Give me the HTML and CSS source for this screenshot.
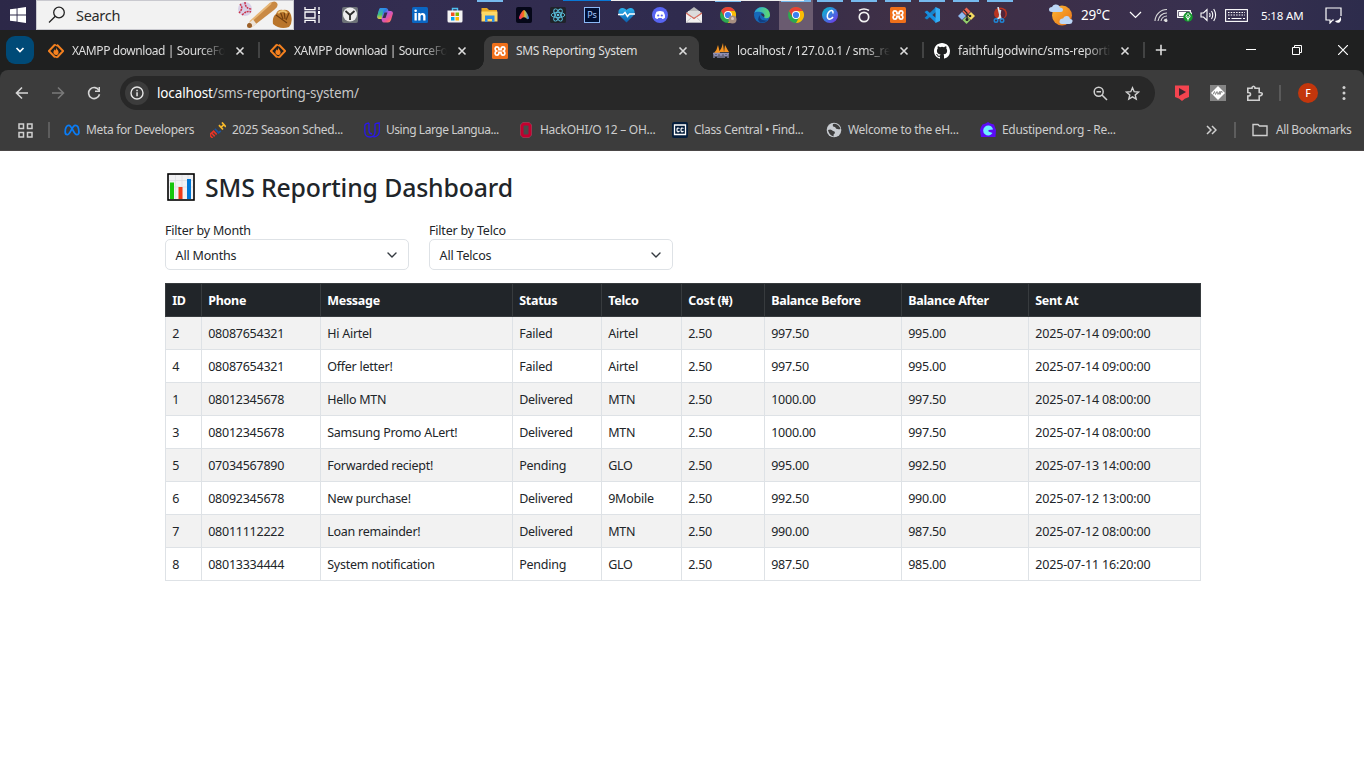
FILE: index.html
```html
<!DOCTYPE html>
<html lang="en">
<head>
<meta charset="utf-8">
<title>SMS Reporting System</title>
<link rel="stylesheet" href="styles.css">
</head>
<body>
<svg width="0" height="0" class="defs">
  <defs>
    <linearGradient id="gCop" x1="0" y1="0" x2="1" y2="1"><stop offset="0" stop-color="#2bb5f5"/><stop offset=".35" stop-color="#2c7be5"/><stop offset=".5" stop-color="#b45be0"/><stop offset=".75" stop-color="#f4568a"/><stop offset="1" stop-color="#f9a53c"/></linearGradient>
    <linearGradient id="gCop2" x1="0" y1="0" x2="0" y2="1"><stop offset="0" stop-color="#2f8bf0"/><stop offset=".6" stop-color="#3fc27c"/><stop offset="1" stop-color="#f3c52e"/></linearGradient>
    <linearGradient id="gCanva" x1="0" y1="0" x2="1" y2="1"><stop offset="0" stop-color="#00c4cc"/><stop offset=".5" stop-color="#3a7be0"/><stop offset="1" stop-color="#7d2ae8"/></linearGradient>
    <linearGradient id="gEdge" x1="0" y1="0" x2="1" y2="0"><stop offset="0" stop-color="#2aa4e0"/><stop offset="1" stop-color="#5fdc6a"/></linearGradient>
    <linearGradient id="gSun" x1="0" y1="0" x2="1" y2="1"><stop offset="0" stop-color="#fdb931"/><stop offset="1" stop-color="#e8701a"/></linearGradient>
    <linearGradient id="gA" x1="0" y1="0" x2="1" y2="0"><stop offset="0" stop-color="#f0307a"/><stop offset=".45" stop-color="#f9701b"/><stop offset=".6" stop-color="#c8c84a"/><stop offset="1" stop-color="#2b6ff0"/></linearGradient>
    <linearGradient id="gHeart" x1="0" y1="0" x2="0" y2="1"><stop offset="0" stop-color="#2cb3ee"/><stop offset="1" stop-color="#0b5fae"/></linearGradient>
    <symbol id="close" viewBox="0 0 10 10"><path d="M1.500 1.500l7 7M8.500 1.500l-7 7" stroke="#dcdcdc" stroke-width="1.600" fill="none"/></symbol>
    <symbol id="sf" viewBox="0 0 16 16"><path d="M7 1.500L.8 8L7 14.300M9 1.700L15.200 8L9 14.500" fill="none" stroke="#f5811f" stroke-width="2"/><path d="M7 1.500l2 1.500M7 13.500l2 1" stroke="#f5811f" stroke-width="1.500"/><path d="M8 4.300C8.300 6.300 10.800 7.200 10.600 9.500C10.400 11.400 9.300 12 8 12S5.400 11 5.400 9.300C5.400 7.800 6.500 7.300 6.600 6.300C7.200 6.700 7.300 7.300 7.300 7.800C7.900 7 8.300 5.800 8 4.300Z" fill="#f5811f"/></symbol>
    <symbol id="xampp" viewBox="0 0 16 16"><rect width="16" height="16" rx="1.500" fill="#f0701a"/><path d="M5 3.800C2.800 3.800 2.300 6.800 4.500 8C2.300 9.200 2.800 12.200 5 12.200C7 12.200 7 10.500 7 9.300H9C9 10.500 9 12.200 11 12.200C13.200 12.200 13.700 9.200 11.500 8C13.700 6.800 13.200 3.800 11 3.800C9 3.800 9 5.500 9 6.700H7C7 5.500 7 3.800 5 3.800Z" fill="none" stroke="#fff" stroke-width="1.700"/></symbol>
    <symbol id="chrome" viewBox="0 0 16 16"><circle cx="8" cy="8" r="8" fill="#2da94f"/><path d="M1.070 4A8 8 0 0 1 14.930 4L8 4L4.540 10Z" fill="#ea4335"/><path d="M14.930 4A8 8 0 0 1 8 16L11.460 10L8 4Z" fill="#fbbc05"/><circle cx="8" cy="8" r="4" fill="#fff"/><circle cx="8" cy="8" r="3.100" fill="#3b7ff0"/></symbol>
    <symbol id="chev" viewBox="0 0 12 12"><path d="M2 4L6 8L10 4" fill="none" stroke="#343a40" stroke-width="1.400" stroke-linecap="round" stroke-linejoin="round"/></symbol>
  </defs>
</svg>

<div class="taskbar">
  <div class="start"><svg width="16" height="16" viewBox="0 0 16 16"><path d="M0 2.300L6.600 1.400V7.600H0ZM7.500 1.200L16 0V7.600H7.500ZM0 8.400H6.600V14.600L0 13.700ZM7.500 8.400H16V16L7.500 14.800Z" fill="#fff"/></svg></div>
  <div class="search">
    <svg width="18" height="18" viewBox="0 0 18 18" fill="none" stroke="#222" stroke-width="1.300"><circle cx="11" cy="6.500" r="5.300"/><path d="M7.300 10.300L1 16.500"/></svg>
    <span>Search</span>
    <svg class="ball" width="56" height="28" viewBox="0 0 56 28"><circle cx="8" cy="8" r="7" fill="#d9cfe6"/><path d="M3 3Q7 7 2 12M8 1Q8 8 15 8M5 14Q10 9 14 11" stroke="#c9344b" stroke-width="1.500" fill="none" stroke-dasharray="2 .8"/><path d="M11 23L33 2Q38 -1 40 2Q42 5 37 9L15 26Z" fill="#c98a45"/><path d="M13 21L34 2" stroke="#e7b777" stroke-width="2"/><path d="M12 22l3.500 4 4-3-3.500-4.500Z" fill="#ece3d8"/><circle cx="12.500" cy="24.500" r="2.500" fill="#9b6029"/><path d="M36 23Q35 16 39 13Q41 8 46 9Q52 8 54 14Q56 22 52 26Q43 29 36 23Z" fill="#b9752b"/><path d="M39 14L50 22M43 10L46 18M47 10L48 18M52 12L49 19" stroke="#734010" stroke-width="1.200"/><path d="M41 12q5-4 9 0" stroke="#edc170" stroke-width="2" fill="none"/></svg>
  </div>
  <div class="slot taskview"><svg width="17" height="16" viewBox="0 0 17 16" fill="none" stroke="#fff" stroke-width="1.300"><path d="M1 0V2.600H11V0M1 16V13.400H11V16M1 5h10v6H1ZM15 0V3M15 8v8"/><rect x="14" y="4" width="2" height="3" fill="#fff" stroke="none"/></svg></div>
  <div class="slot"><svg width="16" height="16" viewBox="0 0 16 16"><rect width="16" height="16" rx="2" fill="#6e7378"/><circle cx="8" cy="7.500" r="7" fill="#ededed"/><path d="M3.500 4L8 8L12.500 4M8 8V13" stroke="#2b2b2b" stroke-width="1.800" fill="none"/></svg></div>
  <div class="slot wide"><svg width="16" height="16" viewBox="0 0 16 16"><path d="M4 1H9Q10.500 1 11 2.500L11.500 4H14Q16.500 4.500 15.800 7L14 13Q13 15.500 11 15.500H7Q5.500 15.500 5 14L4.500 12H2Q-.5 11.500 .3 9L2 3Q2.500 1 4 1Z" fill="url(#gCop)"/><path d="M4 1H8Q6.500 2 6 5L4.500 12H2Q-.5 11.500 .3 9L2 3Q2.500 1 4 1Z" fill="url(#gCop2)"/><path d="M7.500 5.500h3L8.500 11h-3Z" fill="#35304e"/></svg></div>
  <div class="slot wide"><svg width="16" height="16" viewBox="0 0 16 16"><rect width="16" height="16" rx="1.500" fill="#0a66c2"/><path d="M2.500 6h2.300v7.500H2.500ZM6.200 6h2.200v1.200C9.500 5.300 13.500 5.400 13.500 9v4.500h-2.300V9.500c0-2-2.700-2-2.700 0v4H6.200Z" fill="#fff"/><circle cx="3.650" cy="3.700" r="1.300" fill="#fff"/></svg></div>
  <div class="slot wide"><svg width="16" height="16" viewBox="0 0 16 16"><path d="M5.500 4V1.500H10.500V4" fill="none" stroke="#4fc0f0" stroke-width="1.400"/><path d="M.5 3.500H15.500V14Q15.500 15.500 14 15.500H2Q.5 15.500 .5 14Z" fill="#f3f3f3"/><path d="M4 5.500h3.500V9H4Z" fill="#f25022"/><path d="M8.500 5.500H12V9H8.500Z" fill="#7fba00"/><path d="M4 10h3.500v3.500H4Z" fill="#00a4ef"/><path d="M8.500 10H12v3.500H8.500Z" fill="#ffb900"/></svg></div>
  <div class="slot wide on"><svg width="17" height="16" viewBox="0 0 17 16"><path d="M.5 1H6L8 3H16V7H.5Z" fill="#e9a823"/><path d="M.5 4.500H16.500V14.500H.5Z" fill="#ffd967"/><path d="M4 15V8.500H13.500V15H11V12H6.500V15Z" fill="#2f8de4"/></svg></div>
  <div class="slot"><svg width="16" height="16" viewBox="0 0 16 16"><rect width="16" height="16" rx="2" fill="#050718"/><path d="M8 3C9.500 3 13 9 13 11C13 12.500 11 12.500 10.500 11.500Q8 9 5.500 11.500C5 12.500 3 12.500 3 11C3 9 6.500 3 8 3Z" fill="url(#gA)"/></svg></div>
  <div class="slot"><svg width="16" height="16" viewBox="0 0 16 16"><rect width="16" height="16" rx="1.500" fill="#20232a"/><g fill="none" stroke="#5cc5e0" stroke-width=".9"><ellipse cx="8" cy="8" rx="6.800" ry="2.600"/><ellipse cx="8" cy="8" rx="6.800" ry="2.600" transform="rotate(60 8 8)"/><ellipse cx="8" cy="8" rx="6.800" ry="2.600" transform="rotate(120 8 8)"/></g><circle cx="8" cy="8" r="1.300" fill="#5cc5e0"/></svg></div>
  <div class="slot"><span class="ps">Ps</span></div>
  <div class="slot"><svg width="17" height="16" viewBox="0 0 17 16"><path d="M8.500 15.500L1.500 8.500C-1 5 1 1 4.500 1C6.500 1 7.500 2 8.500 3C9.500 2 10.500 1 12.500 1C16 1 18 5 15.500 8.500Z" fill="url(#gHeart)"/><path d="M0 7.500H5L7 5.500L9.500 9.500L11.500 7H17" fill="none" stroke="#fff" stroke-width="1.500"/></svg></div>
  <div class="slot"><svg width="16" height="16" viewBox="0 0 16 16"><circle cx="8" cy="8" r="8" fill="#5865f2"/><path d="M4.500 4.700Q8 3.500 11.500 4.700Q13.300 7.500 13 10.700Q11.500 12 10.300 12L9.600 11H6.400L5.700 12Q4.500 12 3 10.700Q2.700 7.500 4.500 4.700Z" fill="#fff"/><circle cx="6.200" cy="8.500" r="1.100" fill="#5865f2"/><circle cx="9.800" cy="8.500" r="1.100" fill="#5865f2"/></svg></div>
  <div class="slot"><svg width="16" height="16" viewBox="0 0 16 16"><path d="M0 6L8 0L16 6V15.500H0Z" fill="#b9b9b9"/><path d="M2 4H14V10H2Z" fill="#dcdcdc"/><path d="M0 6L8 11L16 6V15.500H0Z" fill="#f2f0f0"/><path d="M0 6L8 11.500L16 6" fill="none" stroke="#d86a5c" stroke-width="1.300"/><path d="M0 15.500L6 10M16 15.500L10 10" stroke="#c7c7c7"/></svg></div>
  <div class="slot on"><svg width="17" height="17" viewBox="0 0 17 17"><use href="#chrome" width="16" height="16"/><circle cx="12.500" cy="12.500" r="4" fill="#a88f82"/><circle cx="12.500" cy="11.500" r="1.500" fill="#dcc9bf"/></svg></div>
  <div class="slot"><svg width="16" height="16" viewBox="0 0 16 16"><circle cx="8" cy="8" r="8" fill="#1669b8"/><path d="M.3 6A8 8 0 0 1 16 8C16 12 10.500 12 10 10C11 8 9.500 5 6.500 5C3.500 4.500 1 5 .3 6Z" fill="url(#gEdge)"/><path d="M6 8Q5 14 13.500 13.500Q10 16 6.500 15.500Q2 13 6 8Z" fill="#123f83"/><path d="M10 10C9 9.500 7 8.500 7 6.500Q10.500 6.500 10.500 9Z" fill="#35304a"/></svg></div>
  <div class="slot on current"><svg width="16" height="16"><use href="#chrome"/></svg></div>
  <div class="slot on"><svg width="16" height="16" viewBox="0 0 16 16"><circle cx="8" cy="8" r="8" fill="url(#gCanva)"/><path d="M11 6.500C11.500 3.500 9.500 3 8 4C5.500 5.500 4.500 9.500 6 11.500C7.500 13 10 11.500 11 10" fill="none" stroke="#fff" stroke-width="1.500"/></svg></div>
  <div class="slot on"><svg width="14" height="16" viewBox="0 0 14 16" fill="none" stroke="#f3f3f3" stroke-width="1.700"><circle cx="7" cy="10" r="4.700"/><path d="M2 3.500Q7 .5 12 3.500"/></svg></div>
  <div class="slot on"><svg width="16" height="16"><use href="#xampp"/></svg></div>
  <div class="slot on"><svg width="16" height="16" viewBox="0 0 16 16"><path d="M12 1V5L3 12.500L.5 11L12 0Z" fill="#1684cc"/><path d="M12 15V11L3 3.500L.5 5L12 16Z" fill="#168fe0"/><path d="M11.500 0L16 2V14L11.500 16Z" fill="#35aef5"/></svg></div>
  <div class="slot on"><svg width="17" height="17" viewBox="0 0 17 17"><path d="M8.500 .5L12.500 4.500L8.500 8.500L4.500 4.500Z" fill="#f06550"/><path d="M4 5L8 9L4 13L0 9Z" fill="#8eb9f0"/><path d="M13 5L17 9L13 13L9 9Z" fill="#f5dc62"/><path d="M8.500 9.500L12.500 13L8.500 17L4.500 13Z" fill="#93d06b"/><path d="M6 3L9 6V13M9 7L12 9" stroke="#222" stroke-width="1.200" fill="none"/><circle cx="9" cy="12.500" r="1.500" fill="#222"/><circle cx="12" cy="9" r="1.300" fill="#222"/></svg></div>
  <div class="slot on"><svg width="16" height="16" viewBox="0 0 16 16"><ellipse cx="8.500" cy="6.500" rx="6.500" ry="6" fill="#b93520"/><path d="M8.500 2A5 5 0 0 1 8.500 12Z" fill="#53263a"/><path d="M6 0L8.500 10L5 12M8.500 3L7.500 10L10 12" stroke="#d7e3ec" stroke-width="1.600" fill="none"/><circle cx="4" cy="13.500" r="1.800" fill="none" stroke="#1e87d6" stroke-width="1.400"/><circle cx="10" cy="13.500" r="1.800" fill="none" stroke="#1e87d6" stroke-width="1.400"/></svg></div>
  <div class="tray">
    <svg class="t-sun" width="24" height="24" viewBox="0 0 24 24"><circle cx="13" cy="12.500" r="10" fill="url(#gSun)"/><path d="M3 9Q0 9 0 6.500T3 4Q4 1 7 1.500Q10 1.500 11 4.500Q14 4.500 14 7T11 9ZM13 21Q10 21 10.500 18T14 15.500Q15 12.500 18 13Q20.500 13 21 16Q24 16 23.500 18.500T20.500 21Z" fill="#bcd6f6"/></svg>
    <span class="t-temp">29°C</span>
    <svg class="t-chev" width="13" height="8" viewBox="0 0 13 8"><path d="M1 1L6.500 6.500L12 1" stroke="#fff" stroke-width="1.200" fill="none"/></svg>
    <svg class="t-wifi" width="14" height="14" viewBox="0 0 14 14" fill="none" stroke="#ddd" stroke-width="1.100"><path d="M1 13A12 12 0 0 1 13 1.500M4 13A9 9 0 0 1 13 5M7 13A6 6 0 0 1 13 8M10 13A3 3 0 0 1 13 11"/><circle cx="12" cy="12.500" r="1" fill="#fff"/></svg>
    <svg class="t-bat" width="16" height="14" viewBox="0 0 16 14"><path d="M.7 2.700H13.300V9.300H.7Z" fill="none" stroke="#fff" stroke-width="1.200"/><path d="M2 4H9V8H2ZM14 4.500h1v3h-1Z" fill="#fff"/><circle cx="11" cy="9" r="4.700" fill="#139a2c"/><path d="M11 5.500Q15 8.500 11 11Q7 8.500 11 5.500M11 8V12.500" stroke="#fff" fill="none"/></svg>
    <svg class="t-vol" width="17" height="14" viewBox="0 0 17 14" fill="none" stroke="#fff" stroke-width="1.100"><path d="M1 5H3.500L7 1.500V12.500L3.500 9H1ZM9.500 5Q10.700 7 9.500 9M11.500 3Q14 7 11.500 11M13.700 1Q17.500 7 13.700 13"/></svg>
    <svg class="t-kbd" width="23" height="13" viewBox="0 0 23 13" fill="none" stroke="#fff" stroke-width="1.100"><rect x=".6" y=".6" width="21.800" height="11.800"/><path d="M3 3.500H20M3 6H20" stroke-dasharray="1.500 1.200"/><path d="M3 9.500h2M6.500 9.500h10M18 9.500h2"/></svg>
    <span class="t-time">5:18 AM</span>
    <svg class="t-act" width="17" height="17" viewBox="0 0 17 17" fill="none" stroke="#fff" stroke-width="1.200"><path d="M9 13H7.500L5 16V13H1V1H16V9"/><path d="M12 13.500Q15.500 12.500 15 9.500Q17.500 13 14.500 15.500Q11 16.500 10 14Z" fill="#fff" stroke="none"/></svg>
  </div>
  <div class="progress"><i></i></div>
</div>

<div class="tabstrip">
  <div class="tabsearch"><svg width="10" height="8" viewBox="0 0 10 8"><path d="M1.500 2L5 5.500L8.500 2" stroke="#fff" stroke-width="1.700" fill="none"/></svg></div>
  <div class="tab t1"><svg width="16" height="16"><use href="#sf"/></svg><span class="fade">XAMPP download | SourceFo</span><svg class="x" width="10" height="10"><use href="#close"/></svg></div>
  <div class="tab t2"><svg width="16" height="16"><use href="#sf"/></svg><span class="fade">XAMPP download | SourceFo</span><svg class="x" width="10" height="10"><use href="#close"/></svg></div>
  <div class="tab active"><svg width="16" height="16"><use href="#xampp"/></svg><span>SMS Reporting System</span><svg class="x" width="10" height="10"><use href="#close"/></svg></div>
  <div class="tab t4"><svg width="17" height="17" viewBox="0 0 17 17"><path d="M1 11Q4 8 5 3L7 11ZM6 10Q9 6 10 1L11 10ZM11 10L12 3Q14 7 16 10Z" fill="#f59320"/><path d="M1 16V12l2 2 2-2v4M7 16v-3h2v3M11 16v-4l2 2 2-2v4M0 11.500H16" stroke="#8f8fb4" fill="none" stroke-width="1.300"/></svg><span class="fade">localhost / 127.0.0.1 / sms_re</span><svg class="x" width="10" height="10"><use href="#close"/></svg></div>
  <div class="tab t5"><svg width="16" height="16" viewBox="0 0 16 16"><path fill="#fff" d="M8 0C3.580 0 0 3.580 0 8c0 3.540 2.290 6.530 5.470 7.590.4.070.55-.17.55-.38 0-.19-.01-.82-.01-1.490-2.010.37-2.530-.49-2.690-.94-.09-.23-.48-.94-.82-1.130-.28-.15-.68-.52-.01-.53.63-.01 1.080.58 1.230.82.72 1.210 1.870.87 2.330.66.07-.52.28-.87.51-1.070-1.780-.2-3.640-.89-3.640-3.950 0-.87.31-1.590.82-2.150-.08-.2-.36-1.020.08-2.120 0 0 .67-.21 2.200.82a7.600 7.600 0 0 1 4 0c1.530-1.040 2.200-.82 2.200-.82.44 1.100.16 1.920.08 2.120.51.56.82 1.270.82 2.150 0 3.070-1.870 3.750-3.650 3.950.29.25.54.73.54 1.480 0 1.070-.01 1.930-.01 2.200 0 .21.15.46.55.38A8 8 0 0 0 16 8c0-4.420-3.580-8-8-8z"/></svg><span class="fade">faithfulgodwinc/sms-reportin</span><svg class="x" width="10" height="10"><use href="#close"/></svg></div>
  <svg class="plus" width="12" height="12" viewBox="0 0 12 12"><path d="M6 .8V11.200M.8 6H11.200" stroke="#ddd" stroke-width="1.600"/></svg>
  <div class="winbtns">
    <svg width="10" height="10" viewBox="0 0 10 10"><path d="M0 4.500H10" stroke="#fff"/></svg>
    <svg width="10" height="10" viewBox="0 0 10 10"><path d="M.5 2.500H7.500V9.500H.5ZM2.500 2.500V.5H9.500V7.500H7.500" fill="none" stroke="#fff"/></svg>
    <svg width="10" height="10" viewBox="0 0 10 10"><path d="M0 0L10 10M10 0L0 10" stroke="#fff" stroke-width="1.200"/></svg>
  </div>
</div>

<div class="chrome">
  <div class="toolbar">
    <svg class="nav" width="14" height="14" viewBox="0 0 14 14"><path d="M13 7H1.500M7 1.500L1.500 7L7 12.500" fill="none" stroke="#d6d6d6" stroke-width="1.600"/></svg>
    <svg class="nav" width="14" height="14" viewBox="0 0 14 14"><path d="M1 7H12.500M7 1.500L12.500 7L7 12.500" fill="none" stroke="#797979" stroke-width="1.600"/></svg>
    <svg class="nav" width="14" height="14" viewBox="0 0 14 14"><path d="M12 4.500A5.500 5.500 0 1 0 12.500 8.300" fill="none" stroke="#d6d6d6" stroke-width="1.600"/><path d="M13 1V6H8V4.500H11.500V1Z" fill="#d6d6d6"/></svg>
    <div class="omnibox">
      <div class="info"><svg width="14" height="14" viewBox="0 0 14 14"><circle cx="7" cy="7" r="6" fill="none" stroke="#e6e6e6" stroke-width="1.400"/><path d="M6.300 6.200h1.500V10.200H6.300ZM6.300 3.700h1.500V5.200H6.300Z" fill="#e6e6e6"/></svg></div>
      <span class="url">localhost<em>/sms-reporting-system/</em></span>
      <svg class="mag" width="15" height="15" viewBox="0 0 15 15" fill="none" stroke="#d0d0d0" stroke-width="1.500"><circle cx="5.700" cy="5.700" r="4.500"/><path d="M9 9L14 14M3.500 5.700H8"/></svg>
      <svg class="star" width="15" height="15" viewBox="0 0 15 15"><path d="M7.500 1.800L9.200 5.700L13.500 6.100L10.200 8.900L11.200 13.100L7.500 10.900L3.800 13.100L4.800 8.900L1.500 6.100L5.800 5.700Z" fill="none" stroke="#d0d0d0" stroke-width="1.400"/></svg>
    </div>
    <div class="exts">
      <svg width="16" height="16" viewBox="0 0 16 16"><path d="M1 .5H15V12Q10 13.500 8 16Q6 13.500 1 12Z" fill="#f4444f"/><path d="M5 3L12 7L5 11Z" fill="#3d2630"/></svg>
      <svg width="16" height="16" viewBox="0 0 16 16"><rect width="16" height="16" fill="#858585"/><path d="M8 1L15 8L8 15L1 8Z" fill="#fff"/><path d="M3 9.500l1.500-3 1 3 1.500-3 1 3 1.500-3v3M10.500 9.500v-3h1.500v1.500" stroke="#858585" fill="none" stroke-width=".9"/></svg>
      <svg width="17" height="17" viewBox="0 0 17 17"><path d="M1.800 3.200H6V2.500Q7.500 0 9 2.500V3.200H13.200V7.500Q16.500 7.500 16.200 9.200T13.200 11V15.200H1.800V11Q4.500 11 4.500 9.200T1.800 7.500Z" fill="none" stroke="#d0d0d0" stroke-width="1.600"/></svg>
      <i></i>
      <b>F</b>
      <svg width="4" height="16" viewBox="0 0 4 16" fill="#d0d0d0"><circle cx="2" cy="2.500" r="1.500"/><circle cx="2" cy="8" r="1.500"/><circle cx="2" cy="13.500" r="1.500"/></svg>
    </div>
  </div>
  <div class="bookmarks">
    <svg class="apps" width="15" height="15" viewBox="0 0 15 15" fill="none" stroke="#cfcfcf" stroke-width="1.500"><path d="M1 1h4.500v4.500H1ZM9.500 1H14v4.500H9.500ZM1 9.500h4.500V14H1ZM9.500 9.500H14V14H9.500Z"/></svg>
    <i class="bar"></i>
    <div class="bm b1"><svg width="16" height="16" viewBox="0 0 16 16"><path d="M1.200 10C1 6 2.800 3.300 4.800 3.300C8 3.300 9.500 12.700 12.800 12.700C14.500 12.700 15 11.500 14.900 9.500C14.800 5.500 13 3.300 11.300 3.300C8 3.300 6.500 12.700 3.300 12.700C2 12.700 1.200 11.800 1.200 10Z" fill="none" stroke="#0a7cf5" stroke-width="1.800"/></svg><span>Meta for Developers</span></div>
    <div class="bm b2"><svg width="16" height="16" viewBox="0 0 16 16"><g fill="none" stroke-width="1.700" transform="rotate(-42 8 8)"><path d="M-1.500 10.500V6H4v4.500M1.300 6v4.500" stroke="#e73427"/><path d="M6.500 5v5.500H9.500" stroke="#1d539f"/><path d="M12 5v6M16 5v6M12 8h4" stroke="#f8b92a"/></g></svg><span>2025 Season Sched...</span></div>
    <div class="bm b3"><svg width="16" height="16" viewBox="0 0 16 16" fill="none" stroke="#2a17e8" stroke-width="1.300"><path d="M5 1Q.8 1.500 .8 4V9.500Q.8 15 6 15Q11 15 11 10V2.500Q11 1.200 15.300 1V9.500Q15 14.500 9.500 15M5 1V9Q5 11.500 8 12"/></svg><span>Using Large Langua...</span></div>
    <div class="bm b4"><svg width="16" height="16" viewBox="0 0 16 16"><path d="M5 0H11L14 3V13L11 16H5L2 13V3Z" fill="#77656a"/><path d="M5.500 2H10.500L12 3.500V12.500L10.500 14H5.500L4 12.500V3.500Z" fill="#4a4a4a" stroke="#c3002f" stroke-width="3"/></svg><span>HackOHI/O 12 – OH...</span></div>
    <div class="bm b5"><svg width="16" height="16" viewBox="0 0 16 16"><rect width="16" height="16" rx="2" fill="#051e3d"/><path d="M2.500 3H13.500V12.500H2.500Z" fill="none" stroke="#fff" stroke-width="1.300"/><path d="M7.500 6.500Q5 5 5 8T7.500 9M11.500 6.500Q9 5 9 8T11.500 9" fill="none" stroke="#fff" stroke-width="1.200"/></svg><span>Class Central • Find...</span></div>
    <div class="bm b6"><svg width="16" height="16" viewBox="0 0 16 16"><circle cx="8" cy="8" r="7.300" fill="#c7cbd0"/><path d="M2 8Q5 6.500 7 9Q9 9 9 11Q7 12 7.500 14.500Q3 13 2 8ZM7 2Q6 5 9 5Q10 8 14.500 7Q13.500 3 9 1.700Z" fill="#3c3c3c"/></svg><span>Welcome to the eH...</span></div>
    <div class="bm b7"><svg width="16" height="16" viewBox="0 0 16 16"><path d="M8 0L10.500 1.500L14 2.500L15 5.500L16 8L15.500 15H1L0 8L1 5L2.500 2.500L5.500 1.500Z" fill="#5b0cf5"/><path d="M12.500 6A5 5 0 1 0 12.500 11L8.500 9.500V8L13 7.500Z" fill="#6ef0ff"/></svg><span>Edustipend.org - Re...</span></div>
    <svg class="more" width="11" height="10" viewBox="0 0 11 10"><path d="M1 1L5 5L1 9M6 1L10 5L6 9" fill="none" stroke="#d0d0d0" stroke-width="1.500"/></svg>
    <i class="bar"></i>
    <div class="bm all"><svg width="16" height="14" viewBox="0 0 16 14"><path d="M1 1.500H6L7.500 3H15V12.500H1Z" fill="none" stroke="#cfcfcf" stroke-width="1.400"/></svg><span>All Bookmarks</span></div>
  </div>
</div>

<main class="page">
  <h2><svg width="32" height="32" viewBox="0 0 32 32"><rect x="3" y="3" width="26" height="26" fill="#f1f1f3" stroke="#000" stroke-width="1.600"/><path d="M4 9.500H28M4 16H28M10.500 4V28M17 4V28M23 4V28" stroke="#dedee3" stroke-width=".8"/><path d="M5 11.500h4V28H5Z" fill="#16c60c"/><path d="M13.500 16h4V28h-4Z" fill="#f03a17"/><path d="M22 8h4V28h-4Z" fill="#0078d7"/></svg><span>SMS Reporting Dashboard</span></h2>
  <div class="filters">
    <div class="field"><label>Filter by Month</label><div class="select"><span>All Months</span><svg width="12" height="12"><use href="#chev"/></svg></div></div>
    <div class="field"><label>Filter by Telco</label><div class="select"><span>All Telcos</span><svg width="12" height="12"><use href="#chev"/></svg></div></div>
  </div>
  <table>
    <colgroup><col class="c1"><col class="c2"><col class="c3"><col class="c4"><col class="c5"><col class="c6"><col class="c7"><col class="c8"><col class="c9"></colgroup>
    <thead><tr><th>ID</th><th>Phone</th><th>Message</th><th>Status</th><th>Telco</th><th>Cost (₦)</th><th>Balance Before</th><th>Balance After</th><th>Sent At</th></tr></thead>
    <tbody>
      <tr><td>2</td><td>08087654321</td><td>Hi Airtel</td><td>Failed</td><td>Airtel</td><td>2.50</td><td>997.50</td><td>995.00</td><td class="date">2025-07-14 09:00:00</td></tr>
      <tr><td>4</td><td>08087654321</td><td>Offer letter!</td><td>Failed</td><td>Airtel</td><td>2.50</td><td>997.50</td><td>995.00</td><td class="date">2025-07-14 09:00:00</td></tr>
      <tr><td>1</td><td>08012345678</td><td>Hello MTN</td><td>Delivered</td><td>MTN</td><td>2.50</td><td>1000.00</td><td>997.50</td><td class="date">2025-07-14 08:00:00</td></tr>
      <tr><td>3</td><td>08012345678</td><td>Samsung Promo ALert!</td><td>Delivered</td><td>MTN</td><td>2.50</td><td>1000.00</td><td>997.50</td><td class="date">2025-07-14 08:00:00</td></tr>
      <tr><td>5</td><td>07034567890</td><td>Forwarded reciept!</td><td>Pending</td><td>GLO</td><td>2.50</td><td>995.00</td><td>992.50</td><td class="date">2025-07-13 14:00:00</td></tr>
      <tr><td>6</td><td>08092345678</td><td>New purchase!</td><td>Delivered</td><td>9Mobile</td><td>2.50</td><td>992.50</td><td>990.00</td><td class="date">2025-07-12 13:00:00</td></tr>
      <tr><td>7</td><td>08011112222</td><td>Loan remainder!</td><td>Delivered</td><td>MTN</td><td>2.50</td><td>990.00</td><td>987.50</td><td class="date">2025-07-12 08:00:00</td></tr>
      <tr><td>8</td><td>08013334444</td><td>System notification</td><td>Pending</td><td>GLO</td><td>2.50</td><td>987.50</td><td>985.00</td><td class="date">2025-07-11 16:20:00</td></tr>
    </tbody>
  </table>
</main>
</body>
</html>
```

FILE: styles.css
```css
* { box-sizing: border-box; }
body {
  margin: 0;
  height: 765px;
  overflow: hidden;
  background: #fff;
  color: #212529;
  font-family: "Noto Sans", "Open Sans", sans-serif;
  font-size: 12.5px;
  letter-spacing: -0.25px;
}
svg { display: block; flex: none; }
.defs { position: absolute; }
span { white-space: nowrap; }

/* Taskbar */
.taskbar {
  position: relative;
  display: flex;
  height: 30px;
  background: linear-gradient(90deg, #2c2848 0, #332d50 30%, #2f2b4e 50%, #3f3046 66%, #3d2f48 75%, #38304f 88%, #2d2c4c 100%);
  color: #fff;
}
.start { display: flex; align-items: center; width: 36px; padding-left: 10px; }
.search {
  display: flex;
  align-items: center;
  width: 258px;
  padding-left: 11px;
  background: #f2f2f2;
  border: 1px solid #c9c9cf;
  color: #2b2b2b;
  font-size: 14.5px;
  letter-spacing: -0.3px;
}
.search span { margin-left: 10px; }
.ball { margin-left: auto; }
.slot { display: flex; align-items: center; justify-content: center; flex: none; width: 34px; }
.wide { width: 35px; }
.taskview { width: 39px; padding-right: 3px; }
.on { background: linear-gradient(#76b9ed, #76b9ed) center top / 26px 2px no-repeat; }
.current { background: linear-gradient(#76b9ed, #76b9ed) center top / 30px 2px no-repeat, #6a5b70; }
.ps {
  width: 16px;
  height: 16px;
  border: 1px solid #8bb8f5;
  background: #001034;
  color: #a9cbff;
  font-size: 9px;
  line-height: 13px;
  text-align: center;
}
.progress { position: absolute; left: 563px; top: 0; width: 241px; height: 1px; background: #eee; }
.progress i { display: block; width: 48px; height: 1px; background: #0a78d6; }
.tray { display: flex; align-items: center; margin-left: 32px; }
.t-temp { width: 48px; padding-left: 8px; font-size: 13.5px; }
.t-chev { margin-left: 8px; }
.t-wifi { margin-left: 12px; }
.t-bat { margin-left: 9px; }
.t-vol { margin-left: 7px; }
.t-kbd { margin-left: 8px; }
.t-time { width: 64px; padding-left: 13px; font-size: 11.5px; letter-spacing: -0.15px; }
.t-act { margin-left: 13px; }

/* Tab strip */
.tabstrip { display: flex; height: 40px; background: #1f2020; color: #dedede; font-size: 12px; letter-spacing: -0.25px; }
.tabsearch {
  display: flex;
  align-items: center;
  justify-content: center;
  width: 28px;
  height: 28px;
  margin: 6px 6px 0;
  border-radius: 9px;
  background: #004a77;
}
.tab { position: relative; display: flex; align-items: center; height: 34px; margin-top: 6px; padding: 0 15px 5px 8px; }
.tab span { width: 153px; margin-left: 8px; }
.t1 span, .t2 span { letter-spacing: -0.42px; }
.active span { letter-spacing: -0.3px; }
.t4 span { margin-left: 7px; letter-spacing: -0.3px; }
.t5 span { letter-spacing: -0.2px; }
.fade { -webkit-mask-image: linear-gradient(90deg, #000 84%, transparent); mask-image: linear-gradient(90deg, #000 84%, transparent); }
.x { margin-left: auto; }
.t1::after, .t4::after, .t5::after {
  content: "";
  position: absolute;
  right: 0;
  top: 6px;
  width: 2px;
  height: 16px;
  background: #424343;
}
.t1 { width: 220px; }
.t2 { width: 224px; padding-left: 10px; padding-right: 17px; }
.active { width: 215px; padding-right: 11px; border-radius: 9px 9px 0 0; background: #3c3c3c; }
.active::before, .active::after {
  content: "";
  position: absolute;
  bottom: 0;
  width: 10px;
  height: 10px;
}
.active::before { left: -10px; background: radial-gradient(circle at 0 0, transparent 9.5px, #3c3c3c 10px); }
.active::after { right: -10px; background: radial-gradient(circle at 100% 0, transparent 9.5px, #3c3c3c 10px); }
.t4 { width: 225px; padding-left: 14px; }
.t5 { width: 221px; padding-left: 10px; }
.plus { margin: 14px 0 0 10px; }
.winbtns { display: flex; gap: 36px; margin: 15px 16px 0 auto; }

/* Toolbar and bookmarks */
.chrome { height: 81px; background: #3c3c3c; border-bottom: 1px solid #4a4646; border-radius: 8px 8px 0 0; box-shadow: 0 -10px 0 #1f2020; clip-path: inset(0); }
.toolbar { display: flex; align-items: center; height: 46px; padding-left: 15px; }
.nav { margin-right: 22px; }
.omnibox { display: flex; align-items: center; width: 1035px; height: 34px; margin-left: -3px; padding: 0 15px 0 5px; border-radius: 17px; background: #282828; }
.info { display: flex; align-items: center; justify-content: center; width: 24px; height: 24px; border-radius: 50%; background: #3c3c3c; }
.url { margin-left: 8px; color: #fff; font-size: 13.5px; letter-spacing: -0.14px; }
.url em { color: #c7c7c7; font-style: normal; }
.mag { margin-left: auto; }
.star { margin-left: 17px; }
.exts { display: flex; align-items: center; margin-left: 19px; }
.exts svg { margin-right: 20px; }
.exts svg:nth-of-type(3) { margin-right: 16px; }
.exts svg:last-child { margin: 0 0 0 24px; }
.exts i { width: 2px; height: 16px; margin-right: 17px; background: #5a5a5a; }
.exts b { width: 20px; height: 20px; border-radius: 50%; background: #c3360c; color: #fff; font-size: 10.5px; font-weight: 500; line-height: 20px; text-align: center; }
.bookmarks { display: flex; align-items: center; height: 28px; padding-left: 18px; color: #cdcdcd; font-size: 12px; letter-spacing: -0.34px; }
.bar { width: 2px; height: 16px; background: #5d5d5d; }
.apps { margin-right: 15px; }
.bm { display: flex; align-items: center; }
.bm span { margin: -1px 0 0 6px; }
.b1 { width: 146px; margin-left: 14px; }
.b2 { width: 154px; }
.b3 { width: 154px; letter-spacing: -0.45px; }
.b4 { width: 154px; letter-spacing: -0.28px; }
.b5 { width: 154px; }
.b6 { width: 154px; letter-spacing: -0.3px; }
.b7 { width: 154px; letter-spacing: -0.3px; }
.more { margin: 0 17px 0 72px; }
.all { margin-left: 16px; letter-spacing: -0.42px; }
.all span { margin-left: 8px; }

/* Page */
.page { width: 1036px; margin-left: 165px; padding-top: 19px; }
h2 { display: flex; align-items: center; height: 33px; margin: 0; font-size: 24.8px; font-weight: 500; letter-spacing: -0.13px; }
h2 span { margin-left: 8px; }
.filters { display: flex; gap: 20px; margin-top: 17px; }
.field { width: 244px; }
label { display: block; height: 19px; line-height: 21px; letter-spacing: -0.2px; }
.select {
  display: flex;
  align-items: center;
  justify-content: space-between;
  height: 31px;
  padding: 1px 10px 0 9.600px;
  border: 1px solid #dee2e6;
  border-radius: 5px;
  letter-spacing: -0.18px;
}
table { width: 1036px; margin-top: 13px; border-collapse: collapse; table-layout: fixed; }
th, td { height: 33px; padding: 0 6.200px; border: 1px solid #dee2e6; text-align: left; white-space: nowrap; }
th { border-color: #373b3e; background: #212529; color: #fff; font-weight: 700; letter-spacing: -0.28px; }
.date { letter-spacing: -0.15px; }
tbody tr:nth-child(odd) td { background: #f2f2f2; }
tbody tr:first-child td { border-top-color: #373b3e; }
.c1 { width: 36px; }
.c2 { width: 119px; }
.c3 { width: 192px; }
.c4 { width: 89px; }
.c5 { width: 80px; }
.c6 { width: 83px; }
.c7 { width: 137px; }
.c8 { width: 127px; }
.c9 { width: 172px; }
```
